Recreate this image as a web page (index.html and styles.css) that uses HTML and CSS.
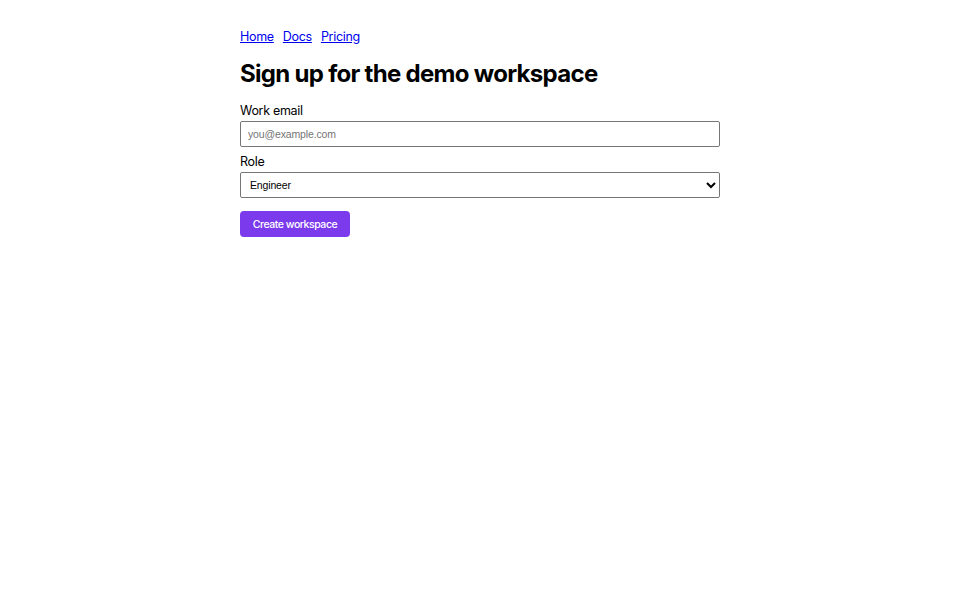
FILE: index.html
```html
<!DOCTYPE html>
<html lang="en">
<head>
<meta charset="utf-8">
<title>Sign up</title>
<link rel="stylesheet" href="styles.css">
</head>
<body>
<main class="page">
  <nav class="nav">
    <a href="#">Home</a>
    <a href="#">Docs</a>
    <a href="#">Pricing</a>
  </nav>
  <h1 class="title">Sign up for the demo workspace</h1>
  <form class="form">
    <label class="field">
      <span class="label">Work email</span>
      <input class="control" type="email" placeholder="you@example.com">
    </label>
    <label class="field">
      <span class="label">Role</span>
      <select class="control select">
        <option>Engineer</option>
        <option>Designer</option>
        <option>Manager</option>
      </select>
    </label>
    <div class="actions">
      <button class="btn" type="button">Create workspace</button>
    </div>
  </form>
</main>
</body>
</html>
```

FILE: styles.css
```css
html, body {
  margin: 0;
  padding: 0;
  background: #ffffff;
}
body {
  font-family: Inter, "Liberation Sans", sans-serif;
  color: #000;
}
.page {
  max-width: 480px;
  margin: 0 auto;
  padding-top: 28px;
}
.nav {
  display: flex;
  gap: 9px;
  font-size: 12.5px;
  line-height: 18px;
  letter-spacing: -0.3px;
}
.nav a {
  color: #0000ee;
  text-decoration: underline;
}
.title {
  margin: 13px 0 0;
  font-size: 24px;
  font-weight: 700;
  line-height: 30px;
  letter-spacing: -0.7px;
}
.form {
  display: flex;
  flex-direction: column;
  margin-top: 14px;
}
.field {
  display: flex;
  flex-direction: column;
  gap: 2px;
  margin-bottom: 7px;
}
.label {
  font-size: 12.5px;
  line-height: 16px;
  letter-spacing: -0.3px;
}
.control {
  box-sizing: border-box;
  width: 100%;
  height: 26px;
  margin: 0;
  padding: 0 7px;
  border: 1px solid #767676;
  border-radius: 2px;
  font-family: "Liberation Sans", Arial, sans-serif;
  font-size: 10.5px;
  letter-spacing: -0.15px;
  color: #000;
  background: #fff;
}
.control::placeholder {
  color: #757575;
}
.select {
  padding: 0 4px 0 5px;
}
.actions {
  margin-top: 6px;
}
.btn {
  height: 26px;
  width: 110px;
  border: 0;
  border-radius: 4px;
  background: #7c3aed;
  color: #fff;
  font-family: Inter, "Liberation Sans", sans-serif;
  font-size: 10.5px;
  font-weight: 500;
  letter-spacing: -0.45px;
  padding: 0;
}
```
